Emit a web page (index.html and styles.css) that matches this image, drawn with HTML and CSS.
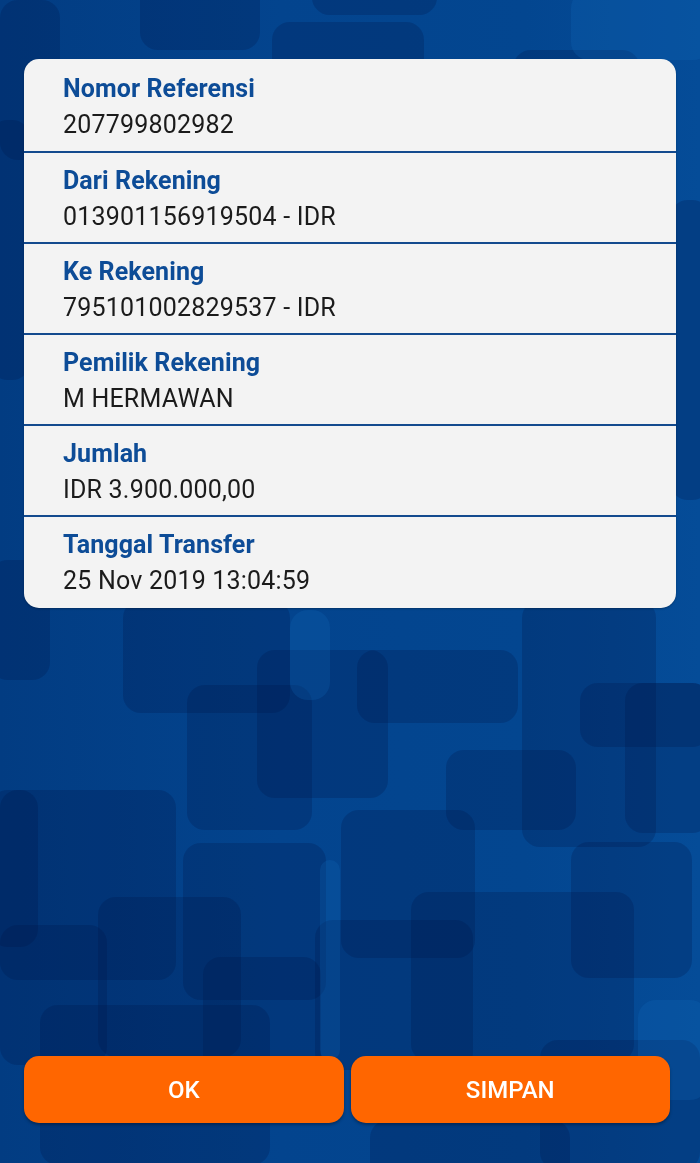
FILE: index.html
```html
<!DOCTYPE html>
<html lang="id">
<head>
<meta charset="utf-8">
<title>Transfer</title>
<link rel="stylesheet" href="styles.css">
</head>
<body>
<div class="bg" aria-hidden="true">
  <span class="tile" style="left:0;top:0;width:60px;height:160px"></span>
  <span class="tile" style="left:140px;top:-20px;width:120px;height:70px"></span>
  <span class="tile" style="left:312px;top:-20px;width:125px;height:35px"></span>
  <span class="tile" style="left:272px;top:22px;width:152px;height:60px"></span>
  <span class="tile" style="left:513px;top:50px;width:127px;height:40px"></span>
  <span class="tile light" style="left:571px;top:-10px;width:140px;height:70px"></span>
  <span class="tile" style="left:-10px;top:120px;width:40px;height:260px"></span>
  <span class="tile" style="left:670px;top:200px;width:40px;height:300px"></span>
  <span class="tile" style="left:-10px;top:560px;width:60px;height:120px"></span>
  <span class="tile" style="left:123px;top:600px;width:167px;height:113px"></span>
  <span class="tile" style="left:187px;top:685px;width:125px;height:145px"></span>
  <span class="tile" style="left:257px;top:650px;width:131px;height:148px"></span>
  <span class="tile" style="left:357px;top:650px;width:161px;height:73px"></span>
  <span class="tile" style="left:446px;top:750px;width:130px;height:80px"></span>
  <span class="tile" style="left:522px;top:600px;width:134px;height:247px"></span>
  <span class="tile" style="left:580px;top:683px;width:130px;height:64px"></span>
  <span class="tile" style="left:625px;top:683px;width:85px;height:150px"></span>
  <span class="tile" style="left:0;top:790px;width:176px;height:190px"></span>
  <span class="tile" style="left:-10px;top:790px;width:48px;height:157px"></span>
  <span class="tile" style="left:183px;top:843px;width:143px;height:157px"></span>
  <span class="tile" style="left:341px;top:810px;width:134px;height:148px"></span>
  <span class="tile" style="left:411px;top:892px;width:223px;height:170px"></span>
  <span class="tile" style="left:571px;top:842px;width:121px;height:136px"></span>
  <span class="tile" style="left:98px;top:897px;width:143px;height:160px"></span>
  <span class="tile" style="left:0;top:925px;width:107px;height:140px"></span>
  <span class="tile" style="left:203px;top:957px;width:118px;height:120px"></span>
  <span class="tile" style="left:315px;top:920px;width:158px;height:150px"></span>
  <span class="tile" style="left:40px;top:1005px;width:230px;height:160px"></span>
  <span class="tile" style="left:540px;top:1040px;width:160px;height:130px"></span>
  <span class="tile" style="left:370px;top:1120px;width:200px;height:60px"></span>
  <span class="tile light" style="left:290px;top:610px;width:40px;height:90px"></span>
  <span class="tile light" style="left:320px;top:860px;width:20px;height:200px"></span>
  <span class="tile light" style="left:638px;top:1000px;width:70px;height:100px"></span>
</div>

<main class="screen">
  <section class="card">
    <div class="row">
      <div class="label">Nomor Referensi</div>
      <div class="value">207799802982</div>
    </div>
    <div class="row">
      <div class="label">Dari Rekening</div>
      <div class="value">013901156919504 - IDR</div>
    </div>
    <div class="row">
      <div class="label">Ke Rekening</div>
      <div class="value">795101002829537 - IDR</div>
    </div>
    <div class="row">
      <div class="label">Pemilik Rekening</div>
      <div class="value">M HERMAWAN</div>
    </div>
    <div class="row">
      <div class="label">Jumlah</div>
      <div class="value">IDR 3.900.000,00</div>
    </div>
    <div class="row">
      <div class="label">Tanggal Transfer</div>
      <div class="value">25 Nov 2019 13:04:59</div>
    </div>
  </section>

  <div class="actions">
    <button class="btn">OK</button>
    <button class="btn">SIMPAN</button>
  </div>
</main>
</body>
</html>
```

FILE: styles.css
```css
* { box-sizing: border-box; }

html, body {
  margin: 0;
  padding: 0;
  height: 100%;
}

body {
  background: #03438c;
  font-family: Roboto, "Noto Sans", "Liberation Sans", sans-serif;
  overflow: hidden;
}

.bg {
  position: fixed;
  inset: 0;
  overflow: hidden;
  z-index: 0;
  background: linear-gradient(90deg, #023c82 0%, #03448e 40%, #034690 75%, #054c98 100%);
}

.tile {
  position: absolute;
  border-radius: 18px;
  background: rgba(0, 22, 70, 0.24);
}

.tile.light {
  background: rgba(20, 110, 190, 0.22);
}

.screen {
  position: relative;
  z-index: 1;
  height: 1163px;
  display: flex;
  flex-direction: column;
  padding: 59px 24px 40px;
}

.card {
  background: #f3f3f3;
  border-radius: 15px;
  overflow: hidden;
  box-shadow: 0 1px 2px rgba(0, 0, 0, 0.25);
}

.row {
  height: 91px;
  padding: 13px 39px 0;
  border-bottom: 2px solid #134a8e;
}

.row:first-child {
  height: 94px;
  padding-top: 15px;
}

.row:last-child {
  height: 91px;
  border-bottom: none;
}

.label {
  font-size: 25px;
  line-height: 30px;
  font-weight: 700;
  color: #0d4c97;
  letter-spacing: 0.1px;
}

.value {
  margin-top: 6px;
  font-size: 25px;
  line-height: 30px;
  font-weight: 400;
  color: #1b1b1b;
  letter-spacing: 0.2px;
}

.actions {
  margin-top: auto;
  display: flex;
  gap: 7px;
  padding-right: 6px;
}

.btn {
  flex: 1;
  height: 67px;
  border: none;
  border-radius: 15px;
  background: #ff6600;
  color: #ffffff;
  font-family: Roboto, "Noto Sans", "Liberation Sans", sans-serif;
  font-size: 24px;
  font-weight: 500;
  box-shadow: 0 2px 3px rgba(0, 0, 0, 0.3);
}
```
